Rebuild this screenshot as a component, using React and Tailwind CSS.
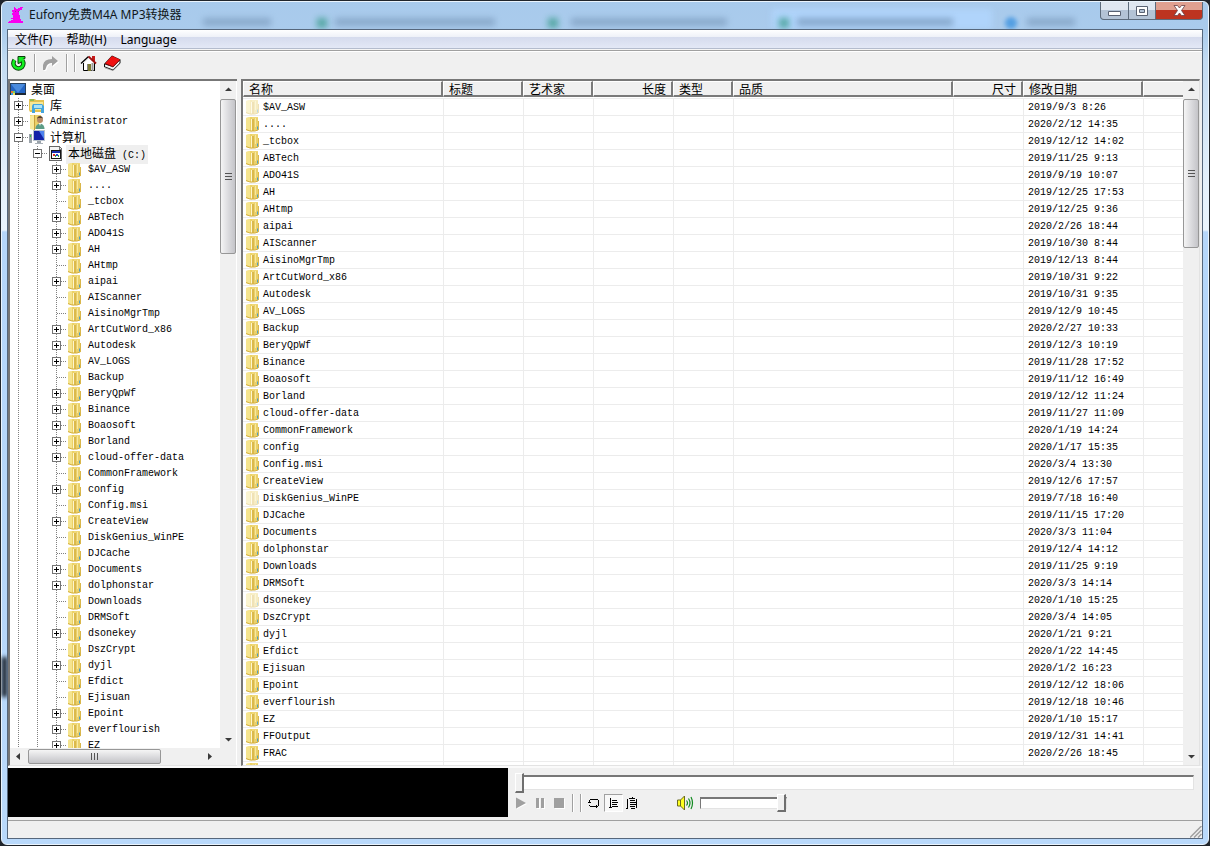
import React from "react";

const LATIN = "font-['Liberation_Mono','Noto_Sans_CJK_SC',monospace] text-[10px]";
const CJK = "font-['Noto_Sans_CJK_SC',sans-serif] text-[12px]";
const UI = "font-['Noto_Sans','Noto_Sans_CJK_SC',sans-serif] text-[12px]";

// name, modified date, hidden, has children
const FOLDERS = [
  ["$AV_ASW", "2019/9/3 8:26", true, true],
  ["....", "2020/2/12 14:35", false, true],
  ["_tcbox", "2019/12/12 14:02", false, false],
  ["ABTech", "2019/11/25 9:13", false, true],
  ["ADO41S", "2019/9/19 10:07", false, true],
  ["AH", "2019/12/25 17:53", false, true],
  ["AHtmp", "2019/12/25 9:36", false, false],
  ["aipai", "2020/2/26 18:44", false, true],
  ["AIScanner", "2019/10/30 8:44", false, false],
  ["AisinoMgrTmp", "2019/12/13 8:44", false, false],
  ["ArtCutWord_x86", "2019/10/31 9:22", false, true],
  ["Autodesk", "2019/10/31 9:35", false, true],
  ["AV_LOGS", "2019/12/9 10:45", false, true],
  ["Backup", "2020/2/27 10:33", false, false],
  ["BeryQpWf", "2019/12/3 10:19", false, true],
  ["Binance", "2019/11/28 17:52", false, true],
  ["Boaosoft", "2019/11/12 16:49", false, true],
  ["Borland", "2019/12/12 11:24", false, true],
  ["cloud-offer-data", "2019/11/27 11:09", false, true],
  ["CommonFramework", "2020/1/19 14:24", false, false],
  ["config", "2020/1/17 15:35", false, true],
  ["Config.msi", "2020/3/4 13:30", false, false],
  ["CreateView", "2019/12/6 17:57", false, true],
  ["DiskGenius_WinPE", "2019/7/18 16:40", true, false],
  ["DJCache", "2019/11/15 17:20", false, false],
  ["Documents", "2020/3/3 11:04", false, true],
  ["dolphonstar", "2019/12/4 14:12", false, true],
  ["Downloads", "2019/11/25 9:19", false, false],
  ["DRMSoft", "2020/3/3 14:14", false, false],
  ["dsonekey", "2020/1/10 15:25", true, true],
  ["DszCrypt", "2020/3/4 14:05", false, false],
  ["dyjl", "2020/1/21 9:21", false, true],
  ["Efdict", "2020/1/22 14:45", false, false],
  ["Ejisuan", "2020/1/2 16:23", false, false],
  ["Epoint", "2019/12/12 18:06", false, true],
  ["everflourish", "2019/12/18 10:46", false, true],
  ["EZ", "2020/1/10 15:17", false, true],
  ["FFOutput", "2019/12/31 14:41", false, false],
  ["FRAC", "2020/2/26 18:45", false, false],
  ["", "", false, false],
];

const COLUMNS = [
  ["名称", "w-[200px]", "text-left"],
  ["标题", "w-[80px]", "text-left"],
  ["艺术家", "w-[70px]", "text-left"],
  ["长度", "w-[80px]", "text-right"],
  ["类型", "w-[60px]", "text-left"],
  ["品质", "w-[220px]", "text-left"],
  ["尺寸", "w-[70px]", "text-right"],
  ["修改日期", "w-[120px]", "text-left"],
];

function Folder({ faded }) {
  return (
    <svg width="16" height="16" viewBox="0 0 16 16" className={faded ? "block shrink-0 opacity-40" : "block shrink-0"} aria-hidden="true">
      <path d="M1 2 5 1h8v12l1 1-4 1H5l-4-1z" fill="#f0d878" />
      <path d="M1 2 5 1v14l-4-1z" fill="#f5e48e" />
      <path d="M5 1h2v14.500L5 15z" fill="#ecd267" />
      <path d="M6.500 3v12" stroke="#fdf6cf" />
      <path d="M8 3v12" stroke="#dbb94c" strokeWidth="2" />
      <path d="M9 2h4v12H9z" fill="#ead06a" />
      <path d="M10.500 2v9" stroke="#f7e9a2" />
      <path d="M1 13.500 5 15h5l3-1" fill="none" stroke="#d3ae3c" />
      <path d="M13.500 5v9" stroke="#d9b64a" />
      <path d="M12.500 10.500v3" stroke="#4f9fc0" />
    </svg>
  );
}

function DesktopIcon() {
  return (
    <svg width="16" height="16" viewBox="0 0 16 16" className="block shrink-0" aria-hidden="true">
      <path d="M0 1h16v12H0z" fill="#27415f" />
      <path d="M1 2h14v9H1z" fill="#2465c4" />
      <path d="M1 2h14L8 11z" fill="#5b9be8" opacity=".7" />
      <path d="M0 11h16v2H0z" fill="#1d2733" />
      <path d="M1 9h2v2H1z" fill="#e67835" />
      <path d="M3 9h2v2H3z" fill="#77d05a" />
      <path d="M1 11h2v2H1z" fill="#3fa0f0" />
      <path d="M3 11h2v2H3z" fill="#f3e05b" />
    </svg>
  );
}

function LibraryIcon() {
  return (
    <svg width="16" height="16" viewBox="0 0 16 16" className="block shrink-0" aria-hidden="true">
      <path d="M0 1h6l1 1h8v12H1L0 12z" fill="#e3c251" />
      <path d="M1 4h13v8H1z" fill="#f8e793" />
      <path d="M1 2h4" stroke="#4ab14c" />
      <path d="M4 6h9l2 2v7h-3v-4H6v4H3V8z" fill="#45a5dc" />
      <path d="M5 7h8v3H5z" fill="#a9e2f8" />
    </svg>
  );
}

function UserIcon() {
  return (
    <svg width="16" height="16" viewBox="0 0 16 16" className="block shrink-0" aria-hidden="true">
      <path d="M1 1h11v14H1z" fill="#ecd06a" />
      <path d="M1 2 5 1v15l-4-1z" fill="#f8e99c" />
      <path d="M5.500 1v15" stroke="#c8a23c" />
      <circle cx="11" cy="6" r="3" fill="#b88a66" />
      <path d="M8 5c0-4 6-4 6 0l-1-1H9z" fill="#56412f" />
      <path d="M6.500 15c0-7 9-7 9 0z" fill="#5c9c86" />
      <path d="m10 9 1 3 1-3z" fill="#fff" />
    </svg>
  );
}

function ComputerIcon() {
  return (
    <svg width="16" height="16" viewBox="0 0 16 16" className="block shrink-0" aria-hidden="true">
      <path d="M0 4h3v9H0z" fill="#9ba3aa" />
      <path d="M1 5h1v2H1z" fill="#39c148" />
      <path d="M4 0h12v11H4z" fill="#b9c2cc" />
      <path d="M5 1h10v9H5z" fill="#1423a8" />
      <path d="M10 1h5v8z" fill="#4d82ee" />
      <path d="M8 11h4v2H8z" fill="#9ba3aa" />
      <path d="M6 13h8v1H6z" fill="#a9b1b9" />
    </svg>
  );
}

function DriveIcon() {
  return (
    <svg width="16" height="16" viewBox="0 0 16 16" className="block shrink-0" aria-hidden="true" shapeRendering="crispEdges">
      <path d="M1.500.5h10l2 2v12h-12z" fill="#f4f4f4" stroke="#666" />
      <path d="M11 1v2h3" fill="none" stroke="#777" />
      <path d="M3 4h10v9H3z" fill="#151515" />
      <path d="M4 5h8v2H4z" fill="#1a2fb0" />
      <path d="M4 7h8v5H4z" fill="#fff" />
      <path d="M5 8h2v2H5z" fill="#e32828" />
      <path d="M7 9h1v2H7zM10 9h1v2h-1z" fill="#2fa040" />
      <path d="M8 8h2v2H8z" fill="#2746d2" />
    </svg>
  );
}

function Rail({ kind }) {
  return (
    <svg width="19" height="16" viewBox="0 0 19 16" className="block shrink-0" aria-hidden="true" shapeRendering="crispEdges">
      <path d="M8.500 0v16" stroke="#808080" strokeDasharray="1 1" />
      {kind === "leaf" && <path d="M9 7.500h9" stroke="#808080" strokeDasharray="1 1" />}
    </svg>
  );
}

function Expander({ open, label }) {
  return (
    <button type="button" aria-label={label} aria-expanded={open} className="block h-4 w-[19px] shrink-0">
      <svg width="19" height="16" viewBox="0 0 19 16" className="block" aria-hidden="true" shapeRendering="crispEdges">
        <path d="M8.500 0v16M9 7.500h9" stroke="#808080" strokeDasharray="1 1" />
        <path d="M4.500 3.500h8v8h-8z" fill="#fff" stroke="#747474" />
        <path d={open ? "M6 7.500h5" : "M6 7.500h5M8.500 5v5"} stroke="#000" />
      </svg>
    </button>
  );
}

function TreeRow({ level, expand, icon, selected, children, name }) {
  return (
    <li className="flex h-4 shrink-0 items-center">
      {level > 1 && <Rail />}
      {level > 2 && <Rail />}
      {level > 0 && (expand ? <Expander open={expand === "open"} label={name} /> : <Rail kind="leaf" />)}
      {icon}
      <span className={selected ? "ml-0.5 whitespace-pre bg-[#efefef] px-0.5 leading-4" : "ml-[5px] whitespace-pre leading-4"}>{children}</span>
    </li>
  );
}

function Arrow({ dir, label }) {
  const d = { up: "M4 9 7.500 5.500 11 9z", down: "M4 6h7L7.500 9.500z", left: "M9 4v7L5 7.500z", right: "M5 4v7l4-3.500z" }[dir];
  return (
    <button type="button" aria-label={label} className="flex h-[17px] w-4 shrink-0 items-center justify-center">
      <svg width="15" height="15" viewBox="0 0 15 15" aria-hidden="true">
        <path d={d} fill="#3a3a3a" />
      </svg>
    </button>
  );
}

function VScroll({ thumb }) {
  return (
    <div className="flex w-4 shrink-0 flex-col bg-[#f0f0f0]">
      <Arrow dir="up" label="向上滚动" />
      <div className="min-h-0 flex-1 pt-px">
        <div className={`${thumb} flex flex-col items-center justify-center gap-0.5 rounded-[2px] border border-[#979797] bg-linear-to-r from-[#f5f5f5] via-[#dcdcdf] to-[#c4c4c8]`}>
          <i className="block h-px w-[7px] bg-[#555]" />
          <i className="block h-px w-[7px] bg-[#555]" />
          <i className="block h-px w-[7px] bg-[#555]" />
        </div>
      </div>
      <Arrow dir="down" label="向下滚动" />
    </div>
  );
}

function TitleBar() {
  return (
    <header className="relative flex h-[27px] shrink-0 items-start justify-between">
      <div aria-hidden="true" className="pointer-events-none absolute inset-0 overflow-hidden">
        <div className="absolute bottom-0 left-[765px] h-5 w-[220px] bg-[#b0d4fb] blur-[3px]" />
        <div className="absolute left-[196px] top-4 h-2 w-[68px] bg-[#7595b6] opacity-60 blur-[3px]" />
        <div className="absolute left-[310px] top-4 h-2.5 w-2.5 bg-[#3f9f91] opacity-80 blur-[3px]" />
        <div className="absolute left-[328px] top-4 h-2 w-[160px] bg-[#7595b6] opacity-60 blur-[3px]" />
        <div className="absolute left-[541px] top-4 h-2.5 w-2.5 bg-[#3f9f91] opacity-80 blur-[3px]" />
        <div className="absolute left-[564px] top-4 h-2 w-[156px] bg-[#7595b6] opacity-60 blur-[3px]" />
        <div className="absolute left-[772px] top-4 h-2.5 w-2.5 bg-[#3f9f91] opacity-80 blur-[3px]" />
        <div className="absolute left-[790px] top-4 h-2 w-[156px] bg-[#6d8dae] opacity-60 blur-[3px]" />
        <div className="absolute left-[998px] top-[15px] h-3 w-3 rounded-full bg-[#3f94e0] opacity-80 blur-[2px]" />
        <div className="absolute left-[1020px] top-4 h-2 w-[48px] bg-[#7595b6] opacity-60 blur-[3px]" />
      </div>
      <div className="relative flex items-center gap-1 pt-1">
        <svg width="18" height="18" viewBox="0 0 18 18" aria-hidden="true" shapeRendering="crispEdges">
          <path d="M7 1h1v1h1v1h2V2h2V1h3v1h-1v2h-2v1h-1v4h1v4h1v2h2v2H1v-1h1v-1h2v-1h2v-1H4v-1h2v-3H5V7h1V6H5V4h2z" fill="#f800f0" />
          <path d="M8 5h1v1H8zM11 5h1v1h-1z" fill="#9b2da0" />
        </svg>
        <h1 className="leading-[18px] text-[#101820]">Eufony免费M4A MP3转换器</h1>
      </div>
      <div className="relative flex h-[18px] overflow-hidden rounded-b-[4px] border border-t-0 border-[#5c6b7c] bg-[#5c6b7c]">
        <button type="button" aria-label="最小化" className="mr-px flex w-[27px] items-center justify-center bg-linear-to-b from-[#dfe7f1] from-45% to-[#b3c3d6] to-50% pt-1">
          <svg width="13" height="6" viewBox="0 0 13 6" aria-hidden="true"><path d="M.5 1.500h12v4H.5z" fill="#fff" stroke="#596273" /></svg>
        </button>
        <button type="button" aria-label="最大化" className="mr-px flex w-[26px] items-center justify-center bg-linear-to-b from-[#dfe7f1] from-45% to-[#b3c3d6] to-50%">
          <svg width="12" height="10" viewBox="0 0 12 10" aria-hidden="true"><path d="M.5.5h11v9H.5zM3.500 3.500v3h5v-3z" fill="#fff" fillRule="evenodd" stroke="#596273" /></svg>
        </button>
        <button type="button" aria-label="关闭" className="flex w-[46px] items-center justify-center bg-linear-to-b from-[#e0a090] from-45% to-[#bd3420] to-50%">
          <svg width="13" height="11" viewBox="0 0 13 11" aria-hidden="true"><path d="M1 .5h3.500l2 2.500 2-2.500H12L8.500 5.500l3.500 5H8.500l-2-2.500-2 2.500H1l3.500-5z" fill="#fff" stroke="#6a4045" strokeWidth=".8" /></svg>
        </button>
      </div>
    </header>
  );
}

function MenuBar() {
  return (
    <nav className="flex h-[21px] shrink-0 items-center border-b border-[#a0a0a0] bg-[linear-gradient(#ffffff_0px,#eef1f8_7px,#d5dbed_7px,#e3e8f6_18px,#b4bccd_18px,#b4bccd_19px,#f5f5f5_19px)] px-[7px] leading-5 text-black">
      <button type="button" className="mr-3.5">文件(F)</button>
      <button type="button" className="mr-3.5">帮助(H)</button>
      <button type="button">Language</button>
    </nav>
  );
}

function Separator() {
  return <span className="h-[18px] w-0.5 shrink-0 border-l border-r border-l-[#a0a0a0] border-r-white" />;
}

function Toolbar() {
  return (
    <div className="flex h-7 shrink-0 items-center border-t border-white bg-[#f0f0f0] px-[3px] pb-[5px]">
      <button type="button" aria-label="刷新" className="mr-[7px]">
        <svg width="16" height="16" viewBox="0 0 16 16" className="block" aria-hidden="true">
          <path d="M3.500 5q-2.500 4 .5 7 3.500 3 7 0 2.500-3 .5-6.500" fill="none" stroke="#0b3d0b" strokeWidth="4.400" />
          <path d="M7 1.500h7v2l-3 1-1 3-3 1z" fill="#18e828" stroke="#0b3d0b" />
          <path d="M3.500 5q-2.500 4 .5 7 3.500 3 7 0 2.500-3 .5-6.500L9.500 3" fill="none" stroke="#12f020" strokeWidth="2.600" />
        </svg>
      </button>
      <Separator />
      <button type="button" aria-label="转换" disabled className="ml-1.5 mr-[7px]">
        <svg width="17" height="16" viewBox="0 0 17 16" className="block" aria-hidden="true">
          <path d="M2 16v-5q1-6 9-6V2l6 5-6 5V9q-5 0-6 5l-1 2z" fill="#fff" />
          <path d="M1 15v-5q1-6 9-6V1l6 5-6 5V8q-5 0-6 5l-1 2z" fill="#a0a0a0" />
        </svg>
      </button>
      <Separator />
      <span className="w-1.5" />
      <Separator />
      <button type="button" aria-label="主页" className="ml-1 mr-[7px]">
        <svg width="17" height="17" viewBox="0 0 17 17" className="block" aria-hidden="true">
          <path d="M4 8.500 9 3.500l4.500 5v7H4z" fill="#fff" />
          <path d="M3.500 8v7.500h11" fill="none" stroke="#000" />
          <path d="M12.500 8v8" stroke="#9c9c9c" strokeWidth="2" />
          <path d="M14.500 8v8" stroke="#000" />
          <path d="M12 1h3v5h-3z" fill="#c41a1a" />
          <path d="M1 8.500 8.500 1.500" fill="none" stroke="#000" strokeWidth="1.300" />
          <path d="M8.500 1.500 16 8.500" fill="none" stroke="#a01010" strokeWidth="1.800" />
          <path d="M8 9h3v7H8z" fill="#7d7a32" />
          <path d="M7.500 9v7" stroke="#333" strokeWidth=".6" />
        </svg>
      </button>
      <button type="button" aria-label="帮助主题">
        <svg width="17" height="16" viewBox="0 0 17 16" className="block" aria-hidden="true">
          <path d="M0 9 8 .5l8.500 4V8L9 15.500 0 12z" fill="#111" />
          <path d="M1 9.500v2l8 3L15.500 8V5.500L9 12z" fill="#f5f5f5" />
          <path d="M1 13 9 15.500 15.500 9" fill="none" stroke="#888" strokeWidth=".6" />
          <path d="M1 8.500 8 1l8 3.500L9 11.500z" fill="#f01010" />
          <path d="m1 8.500 8 3.500 7-7" fill="none" stroke="#7c0808" strokeWidth=".8" />
        </svg>
      </button>
    </div>
  );
}

function Tree() {
  return (
    <section aria-label="文件夹" className="flex w-[229px] shrink-0 flex-col border-l-2 border-t-2 border-b border-l-[#777] border-t-[#777] border-b-[#e3e3e3] bg-white pr-px">
      <div className="flex min-h-0 flex-1">
        <ul className={`${LATIN} min-w-0 flex-1 overflow-hidden pt-px text-black`}>
          <TreeRow level={0} icon={<DesktopIcon />}><span className={CJK}>桌面</span></TreeRow>
          <TreeRow level={1} name="库" expand="closed" icon={<LibraryIcon />}><span className={CJK}>库</span></TreeRow>
          <TreeRow level={1} name="Administrator" expand="closed" icon={<UserIcon />}>Administrator</TreeRow>
          <TreeRow level={1} name="计算机" expand="open" icon={<ComputerIcon />}><span className={CJK}>计算机</span></TreeRow>
          <TreeRow level={2} name="本地磁盘 (C:)" expand="open" selected icon={<DriveIcon />}><span className={CJK}>本地磁盘</span> (C:)</TreeRow>
          {FOLDERS.slice(0, 37).map(([name, , , kids]) => (
            <TreeRow key={name} level={3} name={name} expand={kids ? "closed" : undefined} icon={<Folder />}>{name}</TreeRow>
          ))}
        </ul>
        <VScroll thumb="h-[155px]" />
      </div>
      <div className="flex h-[17px] shrink-0 bg-[#f0f0f0]">
        <Arrow dir="left" label="向左滚动" />
        <div className="flex flex-1 pl-0.5">
          <div className="my-px flex h-[15px] w-[133px] items-center justify-center gap-0.5 rounded-[2px] border border-[#979797] bg-linear-to-b from-[#f5f5f5] via-[#dcdcdf] to-[#c4c4c8]">
            <i className="block h-[7px] w-px bg-[#555]" />
            <i className="block h-[7px] w-px bg-[#555]" />
            <i className="block h-[7px] w-px bg-[#555]" />
          </div>
        </div>
        <Arrow dir="right" label="向右滚动" />
        <span className="w-[18px]" />
      </div>
    </section>
  );
}

const BEVEL = "h-[17px] border-b border-white bg-[#f0f0f0] p-0 font-normal";
const BEVEL_IN = "block h-4 border-b-2 border-l border-r-2 border-t border-b-[#7a7a7a] border-l-white border-r-[#7a7a7a] border-t-white px-[5px] leading-[14px]";

function FileList() {
  return (
    <section aria-label="文件" className="flex min-w-0 flex-1 border-b border-l-2 border-r border-t-2 border-b-[#e3e3e3] border-l-[#777] border-r-[#e3e3e3] border-t-[#777] bg-white">
      <div className="min-w-0 flex-1 overflow-hidden">
        <table className="w-full table-fixed border-separate border-spacing-0 text-black">
          <thead className={CJK}>
            <tr>
              {COLUMNS.map(([label, width, align]) => (
                <th key={label} scope="col" className={`${width} ${align} ${BEVEL}`}>
                  <span className={BEVEL_IN}>{label}</span>
                </th>
              ))}
              <td className={BEVEL}><span className="block h-4 border-b-2 border-l border-t border-b-[#7a7a7a] border-l-white border-t-white" /></td>
            </tr>
          </thead>
          <tbody className={`${LATIN} [&_td]:h-[17px] [&_td]:border-b [&_td]:border-l [&_td]:border-[#ececec] [&_td]:p-0 [&_td]:leading-4 [&_td:first-child]:border-l-0 [&_tr:first-child_td]:h-[18px] [&_tr:first-child_td]:border-t`}>
            {FOLDERS.map(([name, date, hidden]) => (
              <tr key={name}>
                <td>
                  <span className="flex h-4 items-center gap-0.5 overflow-hidden whitespace-pre pl-0.5">
                    <Folder faded={hidden} />
                    <span className="pt-0.5 leading-[14px]">{name}</span>
                  </span>
                </td>
                <td /><td /><td /><td /><td /><td />
                <td><span className="block whitespace-pre pl-1 pt-0.5 leading-[14px]">{date}</span></td>
                <td />
              </tr>
            ))}
          </tbody>
        </table>
      </div>
      <VScroll thumb="h-[149px]" />
    </section>
  );
}

const RANGE =
  "block appearance-none bg-transparent [&::-webkit-slider-runnable-track]:border [&::-webkit-slider-runnable-track]:border-t-2 [&::-webkit-slider-runnable-track]:border-[#e3e3e3] [&::-webkit-slider-runnable-track]:border-t-[#777] [&::-webkit-slider-runnable-track]:border-l-[#777] [&::-webkit-slider-runnable-track]:bg-white [&::-webkit-slider-thumb]:appearance-none [&::-webkit-slider-thumb]:w-[9px] [&::-webkit-slider-thumb]:border [&::-webkit-slider-thumb]:border-r-2 [&::-webkit-slider-thumb]:border-b-2 [&::-webkit-slider-thumb]:border-white [&::-webkit-slider-thumb]:border-r-[#6f6f6f] [&::-webkit-slider-thumb]:border-b-[#6f6f6f] [&::-webkit-slider-thumb]:bg-[#f0f0f0]";

function Player() {
  return (
    <div className="flex h-[54px] shrink-0 border-t-2 border-[#fafafa] bg-[#f0f0f0]">
      <div className="h-[49px] w-[500px] shrink-0 bg-black" />
      <div className="flex min-w-0 flex-1 flex-col pl-[7px] pr-2 pt-1">
        <input
          type="range" aria-label="播放进度" min="0" max="100" defaultValue="0"
          className={`${RANGE} h-5 w-full [&::-webkit-slider-runnable-track]:ml-[7px] [&::-webkit-slider-runnable-track]:h-[15px] [&::-webkit-slider-thumb]:-ml-2 [&::-webkit-slider-thumb]:-mt-1 [&::-webkit-slider-thumb]:h-5`}
        />
        <div className="mt-0.5 flex h-[18px] items-center">
          <button type="button" aria-label="播放" disabled className="mr-[9px]">
            <svg width="12" height="12" viewBox="0 0 12 12" className="block" aria-hidden="true"><path d="M2 1.500v10.500L12 7z" fill="#fff" /><path d="M1 .5v11L11 6z" fill="#a0a0a0" /></svg>
          </button>
          <button type="button" aria-label="暂停" disabled className="mr-[9px]">
            <svg width="9" height="11" viewBox="0 0 9 11" className="block" aria-hidden="true"><path d="M1 1h3v10H1zM6 1h3v10H6z" fill="#fff" /><path d="M0 0h3v10H0zM5 0h3v10H5z" fill="#a0a0a0" /></svg>
          </button>
          <button type="button" aria-label="停止" disabled className="mr-[7px]">
            <svg width="11" height="11" viewBox="0 0 11 11" className="block" aria-hidden="true"><path d="M1 1h10v10H1z" fill="#fff" /><path d="M0 0h10v10H0z" fill="#a0a0a0" /></svg>
          </button>
          <Separator />
          <span className="w-1.5" />
          <Separator />
          <button type="button" aria-label="循环" className="ml-1.5 mr-1">
            <svg width="12" height="12" viewBox="0 0 12 12" className="block" aria-hidden="true" shapeRendering="crispEdges">
              <path d="M2 2.500h8M10.500 3v6M1.500 3v3M0 5.500h3M2 9.500h8M8.500 8v3M1.500 8v1" fill="none" stroke="#000" />
            </svg>
          </button>
          <button type="button" aria-label="列表播放" aria-pressed="true" className="mr-[3px] flex h-[18px] w-[19px] items-center justify-center border border-b-white border-l-[#a0a0a0] border-r-white border-t-[#a0a0a0] bg-[#f8f8f8]">
            <svg width="10" height="12" viewBox="0 0 10 12" className="block" aria-hidden="true" shapeRendering="crispEdges">
              <path d="M1.500 1v10M0 10.500h3M3 3.500h5M3 5.500h6M3 7.500h5M3 9.500h6" fill="none" stroke="#000" />
            </svg>
          </button>
          <button type="button" aria-label="全部播放">
            <svg width="12" height="13" viewBox="0 0 12 13" className="block" aria-hidden="true" shapeRendering="crispEdges">
              <path d="M1.500 2v9M0 11.500h2M4 3.500h5M4 5.500h6M4 7.500h6M4 9.500h5M3 1.500h6M5 11.500h4M10.500 2v9M6.500 0v1" fill="none" stroke="#000" />
            </svg>
          </button>
          <svg width="17" height="16" viewBox="0 0 17 16" className="ml-[39px] mr-1.5 block" aria-hidden="true">
            <path d="M.5 5h3l4-4v14l-4-4h-3z" fill="#ffff20" stroke="#6b6b20" />
            <path d="M3.500 5v6" stroke="#6b6b20" />
            <path d="M9.500 5.500q2 2.500 0 5M11.500 3.500q3 4.500 0 9M14 2q3 6 0 12" fill="none" stroke="#128a20" strokeWidth="1.200" />
          </svg>
          <input
            type="range" aria-label="音量" min="0" max="100" defaultValue="100"
            className={`${RANGE} h-[18px] w-[87px] [&::-webkit-slider-runnable-track]:h-3 [&::-webkit-slider-thumb]:-mt-[5px] [&::-webkit-slider-thumb]:h-[18px]`}
          />
        </div>
      </div>
    </div>
  );
}

export default function App() {
  return (
    <main className={`${UI} flex h-screen flex-col overflow-hidden bg-[#20252c] p-px`}>
      <div className="relative flex min-h-0 flex-1 flex-col rounded-[6px] border border-[#eaf4fd] bg-[linear-gradient(#a8caec_0px,#aacbec_28px,#c3dbf2_60px,#e4f0fb_180px,#eaf4fd_228px,#b5d6fa_230px,#b9d9fb_100%)] px-[5px] pb-[5px]">
        <div aria-hidden="true" className="absolute left-0 top-[655px] h-10 w-[5px] bg-[#0a1018] blur-[2px]" />
        <TitleBar />
        <div className="relative flex min-h-0 flex-1 flex-col border border-[#56677c] bg-[#f0f0f0]">
          <MenuBar />
          <Toolbar />
          <div className="flex min-h-0 flex-1 gap-1 pr-0.5">
            <Tree />
            <FileList />
          </div>
          <Player />
          <footer className="flex h-[18px] shrink-0 items-end justify-end border-t border-[#a0a0a0] bg-[#f0f0f0]">
            <svg width="12" height="12" viewBox="0 0 12 12" aria-hidden="true">
              <path d="M0 11.500 11.500 0M4 11.500l7.500-7.500M8 11.500 11.500 8" stroke="#a0a0a0" strokeWidth="1.500" />
            </svg>
          </footer>
        </div>
      </div>
    </main>
  );
}
